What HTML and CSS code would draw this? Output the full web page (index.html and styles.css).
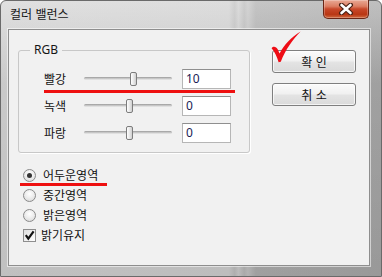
FILE: index.html
```html
<!DOCTYPE html>
<html lang="ko">
<head>
<meta charset="utf-8">
<title>컬러 밸런스</title>
<link rel="stylesheet" href="styles.css">
</head>
<body>
<div class="window">
  <div class="titlebar">
    <span class="title">컬러 밸런스</span>
    <div class="close">
      <svg width="16" height="12" viewBox="0 0 16 12">
        <path d="M3.5 2 L12.5 10 M12.5 2 L3.5 10" stroke="#4a2216" stroke-width="5" stroke-linecap="round"/>
        <path d="M3.5 2 L12.5 10 M12.5 2 L3.5 10" stroke="#ffffff" stroke-width="2.6" stroke-linecap="round"/>
      </svg>
    </div>
  </div>
  <div class="client">
    <div class="left">
      <fieldset class="group">
        <legend>RGB</legend>
        <div class="row">
          <span class="label">빨강</span>
          <div class="slider"><div class="track"></div><div class="thumb" style="left:46px"></div></div>
          <div class="num">10</div>
          <div class="mark mark-row"></div>
        </div>
        <div class="row">
          <span class="label">녹색</span>
          <div class="slider"><div class="track"></div><div class="thumb" style="left:42px"></div></div>
          <div class="num">0</div>
        </div>
        <div class="row">
          <span class="label">파랑</span>
          <div class="slider"><div class="track"></div><div class="thumb" style="left:42px"></div></div>
          <div class="num">0</div>
        </div>
      </fieldset>
      <div class="options">
        <div class="opt"><span class="radio checked"></span><span>어두운영역</span><div class="mark mark-opt"></div></div>
        <div class="opt"><span class="radio"></span><span>중간영역</span></div>
        <div class="opt"><span class="radio"></span><span>밝은영역</span></div>
        <div class="opt"><span class="check"><svg width="11" height="11" viewBox="0 0 11 11"><path d="M1.8 5.2 L4.3 8.6 L9.6 1.4" fill="none" stroke="#111" stroke-width="2.2"/></svg></span><span class="chk-text">밝기유지</span></div>
      </div>
    </div>
    <div class="buttons">
      <svg class="tick" width="30" height="32" viewBox="0 0 30 32">
        <path d="M0.6 17.2 C2.4 14.8 5.2 15.6 6.8 18.6 L8.6 22.4 C13 14 20 6.5 29.6 0.6 C22 8.5 14.5 18.5 9.8 30.8 L7.6 31.2 C6.2 26 3.8 21 0.6 17.2 Z" fill="#ee0d16"/>
      </svg>
      <div class="btn">확 인</div>
      <div class="btn">취 소</div>
    </div>
  </div>
</div>
</body>
</html>
```

FILE: styles.css
```css
* { box-sizing: border-box; }
html, body { margin: 0; padding: 0; }
body {
  width: 382px;
  height: 277px;
  overflow: hidden;
  background: #ffffff;
  font-family: "Noto Sans CJK KR", "Noto Sans", sans-serif;
  font-size: 12px;
  color: #111;
}
.window {
  width: 382px;
  height: 277px;
  border: 1px solid #6a6a6a;
  border-radius: 6px 6px 0 0;
  padding: 0 11px 10px 7px;
  display: flex;
  flex-direction: column;
  background:
    linear-gradient(to bottom, rgba(255,255,255,0.25), rgba(0,0,0,0.06) 30%, rgba(0,0,0,0.1)),
    linear-gradient(to right, #d6d6d6 0%, #d2d2d2 60%, #c2c2c2 61.5%, #d0d0d0 62.5%, #bcbcbc 64%, #c6c6c6 65%, #b2b2b2 67%, #aaaaaa 100%);
}
.titlebar {
  height: 28px;
  display: flex;
  justify-content: space-between;
  align-items: flex-start;
  padding-left: 2px;
}
.title {
  line-height: 26px;
  font-size: 12px;
  color: #151515;
}
.close {
  width: 46px;
  height: 19px;
  margin-top: -1px;
  margin-right: 1px;
  border: 1px solid #6a2616;
  border-top: none;
  border-radius: 0 0 5px 5px;
  background: linear-gradient(to bottom, #e9a995 0%, #dc7e63 35%, #c8482a 50%, #b93714 80%, #cf6a40 100%);
  display: flex;
  align-items: center;
  justify-content: center;
  box-shadow: inset 0 0 0 1px rgba(255,255,255,0.25);
}
.client {
  flex: 1;
  background: #f1f1f1;
  border: 1px solid #8e8e8e;
  box-shadow: 0 0 0 1px rgba(255,255,255,0.55);
  display: flex;
  align-items: flex-start;
  padding: 13px 0 0 9px;
}
.left { width: 232px; }
.group {
  margin: 0;
  width: 232px;
  min-width: 0;
  padding: 12px 18px 9px 11px;
  border: 1px solid #c8c8c8;
  border-radius: 3px;
  box-shadow: 1px 1px 0 #ffffff;
}
.group legend {
  padding: 0 4px;
  line-height: 14px;
  font-family: "Noto Sans", sans-serif;
  font-size: 12px;
  color: #151515;
}
.row {
  position: relative;
  display: flex;
  align-items: center;
  height: 20px;
  margin-left: 14px;
}
.row + .row { margin-top: 7px; }
.label { width: 40px; line-height: 20px; }
.slider {
  position: relative;
  width: 88px;
  height: 20px;
  margin-right: 10px;
}
.track {
  margin-top: 8px;
  height: 3px;
  border-radius: 2px;
  background: linear-gradient(to bottom, #9a9a9a, #cfcfcf 60%, #ececec);
}
.thumb {
  position: absolute;
  top: 3px;
  width: 7px;
  height: 14px;
  border: 1px solid #7c7c7c;
  border-radius: 2px;
  background: linear-gradient(to right, #ffffff, #e4e4e4 60%, #cfcfcf);
}
.num {
  width: 49px;
  height: 20px;
  border: 1px solid #b6b6b6;
  border-top-color: #8f8f8f;
  background: #ffffff;
  padding: 0 3px;
  font-family: "Noto Sans", sans-serif;
  font-size: 12px;
  line-height: 18px;
  color: #1b1b55;
}
.mark {
  position: absolute;
  height: 3px;
  background: #ee1010;
}
.mark-row { left: 0; top: 21px; width: 191px; }
.options {
  margin-top: 12px;
  margin-left: 5px;
  display: flex;
  flex-direction: column;
}
.opt {
  position: relative;
  display: flex;
  align-items: center;
  height: 20px;
  line-height: 20px;
}
.mark-opt { left: -3px; top: 18px; width: 87px; }
.radio {
  position: relative;
  width: 13px;
  height: 13px;
  margin-right: 7px;
  border-radius: 50%;
  border: 1px solid #8a8a8a;
  background: radial-gradient(circle at 50% 35%, #ffffff 0%, #eeeeee 45%, #d4d4d4 100%);
}
.radio.checked::after {
  content: "";
  position: absolute;
  left: 3px;
  top: 3px;
  width: 5px;
  height: 5px;
  border-radius: 50%;
  background: #333333;
}
.check {
  width: 13px;
  height: 13px;
  margin-right: 5px;
  border: 1px solid #8e8e8e;
  background: linear-gradient(135deg, #dedede, #ffffff);
  display: flex;
  align-items: center;
  justify-content: center;
}
.buttons {
  position: relative;
  margin-left: 22px;
  margin-top: 7px;
  display: flex;
  flex-direction: column;
  gap: 10px;
}
.tick {
  position: absolute;
  left: -1px;
  top: -19px;
  z-index: 2;
}
.btn {
  width: 84px;
  height: 23px;
  border: 1px solid #7f7f7f;
  border-radius: 3px;
  background: linear-gradient(to bottom, #fbfbfb 0%, #f1f1f1 45%, #e3e3e3 55%, #dadada 100%);
  box-shadow: inset 0 0 0 1px rgba(255,255,255,0.7);
  text-align: center;
  line-height: 21px;
  font-size: 12px;
  color: #111;
}
```
